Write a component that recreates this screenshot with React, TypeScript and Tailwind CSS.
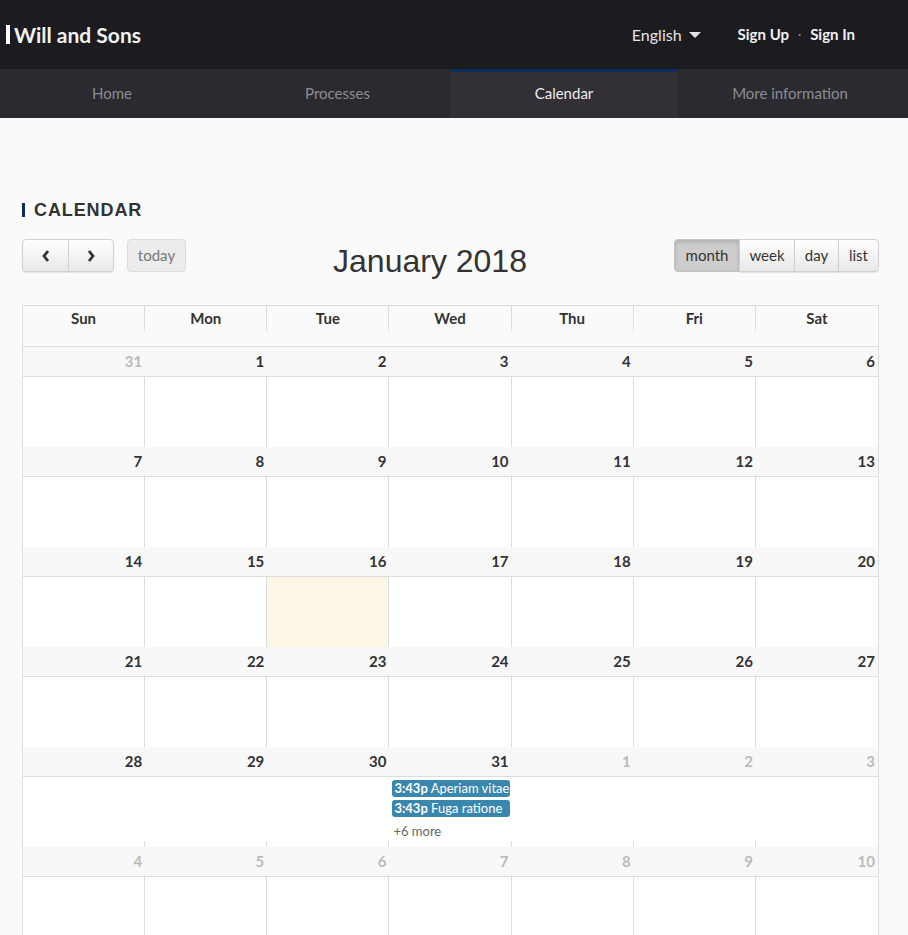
import React from "react";

const weeks: { n: number; other: boolean }[][] = [
  [31, 1, 2, 3, 4, 5, 6].map((n, i) => ({ n, other: i === 0 })),
  [7, 8, 9, 10, 11, 12, 13].map((n) => ({ n, other: false })),
  [14, 15, 16, 17, 18, 19, 20].map((n) => ({ n, other: false })),
  [21, 22, 23, 24, 25, 26, 27].map((n) => ({ n, other: false })),
  [28, 29, 30, 31, 1, 2, 3].map((n, i) => ({ n, other: i > 3 })),
  [4, 5, 6, 7, 8, 9, 10].map((n) => ({ n, other: true })),
];

const days = ["Sun", "Mon", "Tue", "Wed", "Thu", "Fri", "Sat"];
const sans = "font-['Lato','Noto_Sans',sans-serif]";

function Band({ week }: { week: { n: number; other: boolean }[] }) {
  return (
    <div className="grid grid-cols-7 h-[30px] border-b border-[#ddd] bg-[#f8f8f8]">
      {week.map((d, i) => (
        <div
          key={i}
          className={`flex items-center justify-end pr-[3px] text-[15px] font-bold ${
            d.other ? "text-[#bbb]" : "text-[#333]"
          }`}
        >
          {d.n}
        </div>
      ))}
    </div>
  );
}

function Content({ today }: { today?: number }) {
  return (
    <div className="grid grid-cols-7 h-[70px] bg-white">
      {days.map((_, i) => (
        <div
          key={i}
          className={`${i < 6 ? "border-r border-[#ddd]" : ""} ${
            today === i ? "bg-[#fcf7e4]" : ""
          }`}
        />
      ))}
    </div>
  );
}

function EventContent() {
  return (
    <div className="flex flex-col h-[70px] bg-white">
      <div className="grid grid-cols-7 h-[64px]">
        {days.map((_, i) => (
          <div key={i} className="min-w-0">
            {i === 3 && (
              <div className="flex flex-col pt-[3px] pl-[3px] pr-[2px]">
                <div className="h-[17px] rounded-[3px] bg-[#3a87ad] text-white text-[13px] leading-[17px] whitespace-nowrap overflow-hidden pl-[2px]">
                  <span className="font-bold">3:43p</span> Aperiam vitae
                </div>
                <div className="h-[17px] mt-[3px] rounded-[3px] bg-[#3a87ad] text-white text-[13px] leading-[17px] whitespace-nowrap overflow-hidden pl-[2px]">
                  <span className="font-bold">3:43p</span> Fuga ratione
                </div>
                <div className="mt-[6px] pl-[1px] text-[13px] leading-[16px] text-[#666]">
                  +6 more
                </div>
              </div>
            )}
          </div>
        ))}
      </div>
      <div className="grid grid-cols-7 h-[6px]">
        {days.map((_, i) => (
          <div key={i} className={i < 6 ? "border-r border-[#ddd]" : ""} />
        ))}
      </div>
    </div>
  );
}

function Btn({
  children,
  className = "",
}: {
  children: React.ReactNode;
  className?: string;
}) {
  return (
    <div
      className={`h-[33px] flex items-center justify-center border border-[#d0d0d0] text-[15px] text-[#333] bg-gradient-to-b from-white to-[#e8e8e8] shadow-[0_1px_1px_rgba(0,0,0,0.08)] ${className}`}
    >
      {children}
    </div>
  );
}

export default function App() {
  return (
    <div className={`${sans} min-h-screen bg-[#fafafa]`}>
      {/* top bar */}
      <div className="h-[69px] bg-[#1c1b20] flex items-center">
        <div className="flex items-center pl-[6px]">
          <div className="w-[4px] h-[19px] bg-white" />
          <div className="ml-[4px] text-[21px] font-bold text-[#f2f2f2] leading-none">
            Will and Sons
          </div>
        </div>
        <div className="ml-auto flex items-center pr-[53px]">
          <div className="flex items-center text-[16px] text-[#e4e4e4]">
            English
            <svg width="12" height="6" viewBox="0 0 12 6" className="ml-[7px] mt-[1px]">
              <path d="M0 0 L12 0 L6 6 Z" fill="#e4e4e4" />
            </svg>
          </div>
          <div className="ml-[37px] flex items-center text-[15px] font-bold text-[#f0f0f0]">
            <span>Sign Up</span>
            <span className="mx-[9px] text-[#aaa] font-normal text-[12px]">·</span>
            <span>Sign In</span>
          </div>
        </div>
      </div>
      {/* nav */}
      <div className="h-[49px] bg-[#2b2a30] flex text-[15px]">
        <div className="w-[224px] flex items-center justify-center text-[#8d8c92]">Home</div>
        <div className="w-[227px] flex items-center justify-center text-[#8d8c92]">Processes</div>
        <div className="w-[226px] flex items-center justify-center text-[#ededed] bg-[#322f37] border-t-[3px] border-[#0b2d5b] pb-[3px]">
          Calendar
        </div>
        <div className="w-[226px] flex items-center justify-center text-[#8d8c92]">More information</div>
      </div>

      {/* content */}
      <div className="pl-[22px] pr-[29px]">
        <div className="mt-[84px] flex items-center h-[16px]">
          <div className="w-[3px] h-[14px] bg-[#0b2d5b]" />
          <div className="ml-[9px] font-['Liberation_Sans',Arial,sans-serif] font-bold text-[18px] tracking-[0.9px] text-[#333] leading-none">
            CALENDAR
          </div>
        </div>

        {/* toolbar */}
        <div className="mt-[21px] flex items-center justify-between h-[33px]">
          <div className="flex items-center">
            <div className="flex">
              <Btn className="w-[47px] rounded-l-[4px]">
                <svg width="10" height="14" viewBox="0 0 10 14">
                  <path d="M7 2 L3 7 L7 12" stroke="#333" strokeWidth="2.8" fill="none" />
                </svg>
              </Btn>
              <Btn className="w-[46px] rounded-r-[4px] -ml-px">
                <svg width="10" height="14" viewBox="0 0 10 14">
                  <path d="M3 2 L7 7 L3 12" stroke="#333" strokeWidth="2.8" fill="none" />
                </svg>
              </Btn>
            </div>
            <div className="ml-[13px] w-[59px] h-[33px] flex items-center justify-center rounded-[4px] border border-[#dcdcdc] bg-[#ececec] text-[15px] text-[#777]">
              today
            </div>
          </div>
          <div className="font-['Liberation_Sans',Arial,sans-serif] text-[32px] text-[#333] leading-none pt-[10px]">
            January 2018
          </div>
          <div className="flex">
            <div className="w-[66px] h-[33px] flex items-center justify-center rounded-l-[4px] border border-[#c2c2c2] bg-[#cdcdcd] shadow-[inset_0_2px_4px_rgba(0,0,0,0.15)] text-[15px] text-[#333]">
              month
            </div>
            <Btn className="w-[56px] -ml-px">week</Btn>
            <Btn className="w-[45px] -ml-px">day</Btn>
            <Btn className="w-[41px] -ml-px rounded-r-[4px]">list</Btn>
          </div>
        </div>

        {/* calendar table */}
        <div className="mt-[33px] border-x border-t border-[#ddd]">
          <div className="border-b border-[#ddd]">
            <div className="grid grid-cols-7 h-[25px]">
              {days.map((d, i) => (
                <div
                  key={d}
                  className={`flex items-center justify-center text-[15px] font-bold text-[#333] ${
                    i < 6 ? "border-r border-[#ddd]" : ""
                  }`}
                >
                  {d}
                </div>
              ))}
            </div>
            <div className="h-[15px]" />
          </div>
          {weeks.map((w, wi) => (
            <div key={wi}>
              <Band week={w} />
              {wi === 4 ? (
                <EventContent />
              ) : (
                <Content today={wi === 2 ? 2 : undefined} />
              )}
            </div>
          ))}
        </div>
      </div>
    </div>
  );
}
